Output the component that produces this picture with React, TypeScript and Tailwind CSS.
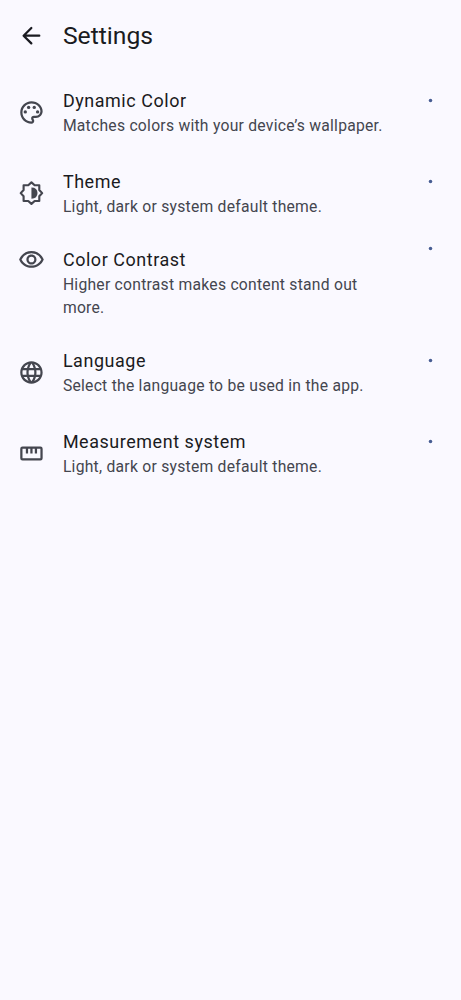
import React from "react";
import { MdOutlinePalette, MdLanguage, MdOutlineRemoveRedEye } from "react-icons/md";

const iconClass = "block h-[26.9px] w-[26.9px] shrink-0";

function ArrowIcon() {
  return (
    <svg viewBox="0 0 24 24" className={iconClass} fill="none" stroke="currentColor" strokeWidth="2" strokeLinecap="round" strokeLinejoin="round">
      <path d="M19 12.2H5.2M11.9 5.3L5 12.2L11.9 19.1" />
    </svg>
  );
}

function ContrastIcon() {
  return (
    <svg viewBox="0 0 24 24" className={iconClass}>
      <path d="M9.15 4.7L12 2.1L14.85 4.7H19V8.85L21.6 11.7L19 14.55V18.7H14.85L12 21.3L9.15 18.7H5V14.55L2.4 11.7L5 8.85V4.7Z" fill="none" stroke="currentColor" strokeWidth="1.9" strokeLinejoin="round" />
      <path d="M12 6.7q5.4 0 5.4 5t-5.4 5Z" fill="currentColor" />
    </svg>
  );
}

function RulerIcon() {
  return (
    <svg viewBox="0 0 24 24" className={iconClass} fill="none" stroke="currentColor" strokeWidth="2">
      <rect x="3" y="6.8" width="18" height="10.4" rx="1" />
      <path d="M8 7v5M12 7v5M16 7v5" />
    </svg>
  );
}

type Item = { title: string; body: string; icon: React.ReactNode; tall?: boolean };

const items: Item[] = [
  { title: "Dynamic Color", body: "Matches colors with your device’s wallpaper.", icon: <MdOutlinePalette className={iconClass} /> },
  { title: "Theme", body: "Light, dark or system default theme.", icon: <ContrastIcon /> },
  { title: "Color Contrast", body: "Higher contrast makes content stand out more.", icon: <MdOutlineRemoveRedEye className={iconClass} />, tall: true },
  { title: "Language", body: "Select the language to be used in the app.", icon: <MdLanguage className={iconClass} /> },
  { title: "Measurement system", body: "Light, dark or system default theme.", icon: <RulerIcon /> },
];

function SettingRow({ title, body, icon, tall }: Item) {
  return (
    <li className={tall ? "flex h-[98.6px] items-start pt-[13px] pr-[28px] pl-[18px]" : "flex h-[80.8px] items-center pr-[28px] pl-[18px]"}>
      <span className="text-[#44464f]">{icon}</span>
      <div className={tall ? "ml-[18px] w-[323px] pt-[0.8px]" : "ml-[18px] w-[323px] pt-[1.4px]"}>
        <h2 className="text-[17.95px] leading-[26.9px] tracking-[0.56px] text-[#1a1b21]">{title}</h2>
        <p className="text-[15.7px] leading-[22.4px] tracking-[0.25px] text-[#44464f]">{body}</p>
      </div>
      <svg viewBox="0 0 5 5" className={tall ? "ml-auto h-[5px] w-[5px]" : "mt-[26.2px] ml-auto h-[5px] w-[5px] self-start"}>
        <circle cx="2.5" cy="2.5" r="1.75" fill="#475d92" />
      </svg>
    </li>
  );
}

export default function App() {
  return (
    <main className="min-h-[1000px] w-full bg-[#faf9ff] font-['Roboto',sans-serif]">
      <header className="flex h-[71.8px] items-center pl-[18px] text-[#1a1b21]">
        <ArrowIcon />
        <h1 className="ml-[18px] text-[24.7px] leading-[31.4px]">Settings</h1>
      </header>
      <ul>
        {items.map((item) => (
          <SettingRow key={item.title} {...item} />
        ))}
      </ul>
    </main>
  );
}
